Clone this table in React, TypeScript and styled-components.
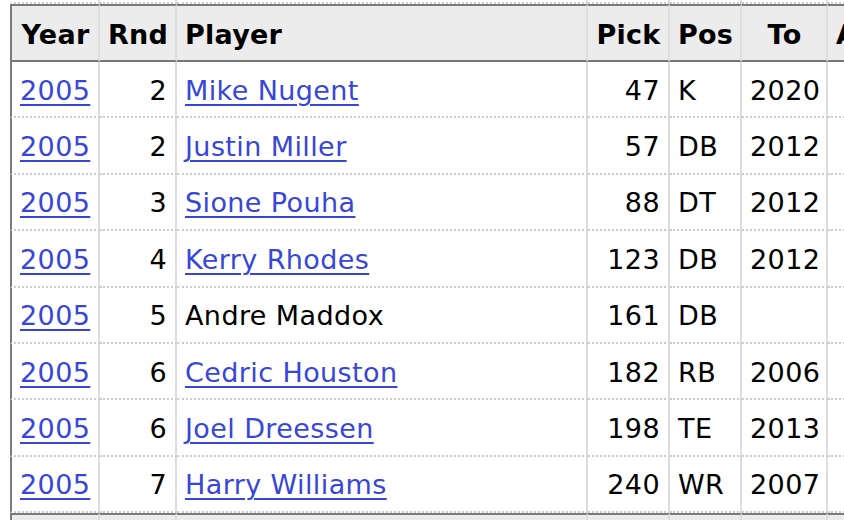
import React from 'react';
import styled, { createGlobalStyle } from 'styled-components';

type Pick = {
    year: string;
    rnd: number;
    player: string;
    linked: boolean;
    pick: number;
    pos: string;
    to: string;
};

const picks: Pick[] = [
    { year: '2005', rnd: 2, player: 'Mike Nugent', linked: true, pick: 47, pos: 'K', to: '2020' },
    { year: '2005', rnd: 2, player: 'Justin Miller', linked: true, pick: 57, pos: 'DB', to: '2012' },
    { year: '2005', rnd: 3, player: 'Sione Pouha', linked: true, pick: 88, pos: 'DT', to: '2012' },
    { year: '2005', rnd: 4, player: 'Kerry Rhodes', linked: true, pick: 123, pos: 'DB', to: '2012' },
    { year: '2005', rnd: 5, player: 'Andre Maddox', linked: false, pick: 161, pos: 'DB', to: '' },
    { year: '2005', rnd: 6, player: 'Cedric Houston', linked: true, pick: 182, pos: 'RB', to: '2006' },
    { year: '2005', rnd: 6, player: 'Joel Dreessen', linked: true, pick: 198, pos: 'TE', to: '2013' },
    { year: '2005', rnd: 7, player: 'Harry Williams', linked: true, pick: 240, pos: 'WR', to: '2007' },
];

const columns: { label: string; width: number; align: 'left' | 'center' }[] = [
    { label: 'Year', width: 90, align: 'center' },
    { label: 'Rnd', width: 77, align: 'center' },
    { label: 'Player', width: 411, align: 'left' },
    { label: 'Pick', width: 82, align: 'center' },
    { label: 'Pos', width: 72, align: 'center' },
    { label: 'To', width: 86, align: 'center' },
    { label: 'AP1', width: 76, align: 'center' },
];

const HeaderRow = ({ top }: { top?: boolean }) => (
    <HeadRow>
        {columns.map((c, i) => (
            <HeadCell key={c.label} $align={c.align} $first={i === 0} $top={top}>
                {c.label}
            </HeadCell>
        ))}
    </HeadRow>
);

export default function App() {
    return (
        <>
            <GlobalStyle/>
            <Page>
                <Table>
                    <colgroup>
                        {columns.map((c) => (
                            <col key={c.label} style={{ width: c.width }}/>
                        ))}
                    </colgroup>
                    <thead>
                        <CutRow>
                            {columns.map((c, i) => (
                                <CutCell key={c.label} $first={i === 0}/>
                            ))}
                        </CutRow>
                        <HeaderRow top/>
                    </thead>
                    <tbody>
                        {picks.map((p) => (
                            <tr key={p.pick}>
                                <Cell $first>
                                    <PlayerLink href="#">{p.year}</PlayerLink>
                                </Cell>
                                <Cell $align="right">{p.rnd}</Cell>
                                <Cell>
                                    {p.linked ? <PlayerLink href="#">{p.player}</PlayerLink> : p.player}
                                </Cell>
                                <Cell $align="right">{p.pick}</Cell>
                                <Cell>{p.pos}</Cell>
                                <Cell>{p.to}</Cell>
                                <Cell/>
                            </tr>
                        ))}
                        <HeaderRow/>
                    </tbody>
                </Table>
            </Page>
        </>
    );
}

const GlobalStyle = createGlobalStyle`
    html, body {
        margin: 0;
        padding: 0;
        background: #fff;
        overflow: hidden;
    }
    body {
        font-family: "DejaVu Sans", Verdana, sans-serif;
        color: #000;
    }
`;

const Page = styled.div`
    width: 844px;
    height: 520px;
    overflow: hidden;
    padding-left: 10px;
    box-sizing: border-box;
`;

const Table = styled.table`
    border-collapse: separate;
    border-spacing: 0;
    table-layout: fixed;
    width: 894px;
    font-size: 27px;
    letter-spacing: 0.4px;
`;

const CutRow = styled.tr`
    height: 4px;
`;

const CutCell = styled.td<{ $first?: boolean }>`
    height: 2px;
    padding: 0;
    border-right: 2px solid #ddd;
    border-bottom: 2px dotted #ccc;
    ${({ $first }) => $first && 'border-left: 2px solid #fff;'}
`;

const HeadRow = styled.tr`
    background: #ececec;
`;

const HeadCell = styled.th<{ $align: 'left' | 'center'; $first?: boolean; $top?: boolean }>`
    height: 58px;
    box-sizing: border-box;
    padding: 2px 7px 0 8px;
    text-align: ${({ $align }) => $align};
    font-weight: bold;
    letter-spacing: 0.25px;
    white-space: nowrap;
    overflow: hidden;
    vertical-align: middle;
    border-right: 2px solid #ddd;
    border-top: 2px solid #7a7a7a;
    border-bottom: ${({ $top }) => ($top ? '2px solid #777' : 'none')};
    ${({ $first }) => $first && 'border-left: 2px solid #7a7a7a;'}
`;

const Cell = styled.td<{ $align?: 'left' | 'right'; $first?: boolean }>`
    height: 56.4px;
    box-sizing: border-box;
    padding: 2px 8px 0 8px;
    text-align: ${({ $align }) => $align ?? 'left'};
    white-space: nowrap;
    overflow: hidden;
    vertical-align: middle;
    border-right: 2px solid #ddd;
    border-bottom: 2px dotted #ccc;
    ${({ $first }) => $first && 'border-left: 2px solid #7a7a7a;'}
`;

const PlayerLink = styled.a`
    color: #3746d8;
    text-decoration: underline;
    text-decoration-thickness: 2px;
    text-underline-offset: 4px;
`;
